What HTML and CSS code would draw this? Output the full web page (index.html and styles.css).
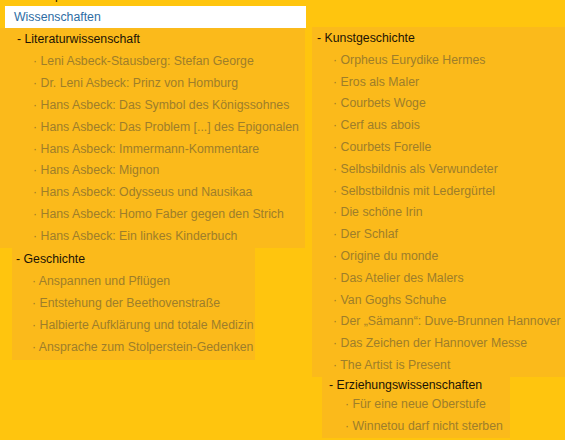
FILE: index.html
```html
<!DOCTYPE html>
<html lang="de">
<head>
<meta charset="utf-8">
<title>Wissenschaften</title>
<link rel="stylesheet" href="styles.css">
</head>
<body>
<div class="crumb">Schwerpunkte</div>
<div class="page">
  <div class="left">
    <div class="search">Wissenschaften</div>
    <ul class="box lit">
      <li class="head">- Literaturwissenschaft</li>
      <li>· Leni Asbeck-Stausberg: Stefan George</li>
      <li>· Dr. Leni Asbeck: Prinz von Homburg</li>
      <li>· Hans Asbeck: Das Symbol des Königssohnes</li>
      <li>· Hans Asbeck: Das Problem [...] des Epigonalen</li>
      <li>· Hans Asbeck: Immermann-Kommentare</li>
      <li>· Hans Asbeck: Mignon</li>
      <li>· Hans Asbeck: Odysseus und Nausikaa</li>
      <li>· Hans Asbeck: Homo Faber gegen den Strich</li>
      <li>· Hans Asbeck: Ein linkes Kinderbuch</li>
    </ul>
    <ul class="box gesch">
      <li class="head">- Geschichte</li>
      <li>· Anspannen und Pflügen</li>
      <li>· Entstehung der Beethovenstraße</li>
      <li>· Halbierte Aufklärung und totale Medizin</li>
      <li>· Ansprache zum Stolperstein-Gedenken</li>
    </ul>
  </div>
  <div class="right">
    <ul class="box kunst">
      <li class="head">- Kunstgeschichte</li>
      <li>· Orpheus Eurydike Hermes</li>
      <li>· Eros als Maler</li>
      <li>· Courbets Woge</li>
      <li>· Cerf aus abois</li>
      <li>· Courbets Forelle</li>
      <li>· Selbsbildnis als Verwundeter</li>
      <li>· Selbstbildnis mit Ledergürtel</li>
      <li>· Die schöne Irin</li>
      <li>· Der Schlaf</li>
      <li>· Origine du monde</li>
      <li>· Das Atelier des Malers</li>
      <li>· Van Goghs Schuhe</li>
      <li>· Der „Sämann“: Duve-Brunnen Hannover</li>
      <li>· Das Zeichen der Hannover Messe</li>
      <li>· The Artist is Present</li>
    </ul>
    <ul class="box erz">
      <li class="head">- Erziehungswissenschaften</li>
      <li>· Für eine neue Oberstufe</li>
      <li>· Winnetou darf nicht sterben</li>
    </ul>
  </div>
</div>
</body>
</html>
```

FILE: styles.css
```css
html, body {
  margin: 0;
  padding: 0;
}
body {
  width: 565px;
  height: 440px;
  overflow: hidden;
  background: #ffc50e;
  font-family: "Liberation Sans", Arial, sans-serif;
  font-size: 12.3px;
  color: #9e7e2a;
}
.crumb {
  margin-top: -12px;
  padding-left: 14px;
  line-height: 15px;
  color: #1c1405;
}
.page {
  display: flex;
  align-items: flex-start;
}
.left {
  width: 305px;
  flex: none;
}
.search {
  margin: 3px 0 0 5px;
  width: 292px;
  height: 22px;
  line-height: 22px;
  padding-left: 9px;
  background: #ffffff;
  color: #2e6da4;
}
.box {
  list-style: none;
  margin: 0;
  background: #fbba1b;
  white-space: nowrap;
}
.box li {
  line-height: 21.9px;
}
.box .head {
  color: #1c1405;
}
.lit {
  padding: 1px 0 0 33px;
  width: 272px;
}
.lit .head {
  margin-left: -16px;
}
.gesch {
  margin-left: 12px;
  width: 223px;
  padding: 1px 0 1px 20px;
}
.gesch .head {
  margin-left: -16px;
}
.right {
  margin-left: 7px;
  flex: 1;
  padding-top: 24px;
}
.kunst {
  padding: 1px 0 0 21px;
}
.kunst li {
  line-height: 21.8px;
}
.kunst .head {
  margin-left: -16px;
}
.erz {
  margin-left: 10px;
  width: 165px;
  padding: 0 0 0 23px;
}
.erz .head {
  margin-left: -16px;
  line-height: 17px;
}
```
